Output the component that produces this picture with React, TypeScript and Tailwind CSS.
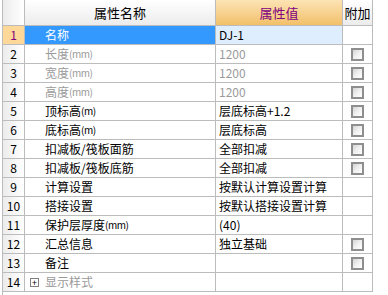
import React from 'react'

type Row = {
	name: string
	unit?: string
	value: string
	check: boolean
	muted?: boolean
	expand?: boolean
}

const rows: Row[] = [
	{ name: '名称', value: 'DJ-1', check: false },
	{ name: '长度', unit: '(mm)', value: '1200', check: true, muted: true },
	{ name: '宽度', unit: '(mm)', value: '1200', check: true, muted: true },
	{ name: '高度', unit: '(mm)', value: '1200', check: true, muted: true },
	{ name: '顶标高', unit: '(m)', value: '层底标高+1.2', check: true },
	{ name: '底标高', unit: '(m)', value: '层底标高', check: true },
	{ name: '扣减板/筏板面筋', value: '全部扣减', check: true },
	{ name: '扣减板/筏板底筋', value: '全部扣减', check: true },
	{ name: '计算设置', value: '按默认计算设置计算', check: false },
	{ name: '搭接设置', value: '按默认搭接设置计算', check: false },
	{ name: '保护层厚度', unit: '(mm)', value: '(40)', check: false },
	{ name: '汇总信息', value: '独立基础', check: true },
	{ name: '备注', value: '', check: true },
	{ name: '显示样式', value: '', check: false, muted: true, expand: true },
]

function Checkbox() {
	return (
		<div className="w-[13px] h-[13px] border-2 border-[#8e8e8e] bg-gradient-to-br from-[#d4d4d4] via-[#f0f0f0] to-white" />
	)
}

export default function App() {
	return (
		<div className="w-[388px] h-[295px] bg-white pl-[2px] text-[12px] leading-none text-black" style={{ fontFamily: '"Noto Sans CJK SC", "Liberation Sans", sans-serif' }}>
			<div className="w-[371px] h-full border-l border-[#bcbcbc]">
				<div className="flex h-[26px]">
					<div className="w-[22px] border-r border-b border-[#bcbcbc] bg-gradient-to-r from-[#ececec] to-white" />
					<div className="w-[191px] flex items-center justify-center border-r border-b border-[#bcbcbc] bg-gradient-to-b from-white to-[#ececec] text-[13px]">
						属性名称
					</div>
					<div className="w-[127px] flex items-center justify-center border-r border-b border-[#bcbcbc] bg-gradient-to-b from-[#fce3b4] to-[#f2c068] text-[13px] text-[#800080]">
						属性值
					</div>
					<div className="w-[30px] flex items-center justify-center border-r border-b border-[#bcbcbc] bg-gradient-to-b from-white to-[#ececec] text-[13px]">
						附加
					</div>
				</div>
				{rows.map((r, i) => {
					const selected = i === 0
					return (
						<div key={i} className="flex h-[19px]">
							<div className={`w-[22px] flex items-center justify-center border-r border-b border-[#bcbcbc] ${selected ? 'bg-[#fdd898] text-[#800080]' : 'bg-gradient-to-r from-[#ececec] to-white'}`}>
								{i + 1}
							</div>
							<div className={`w-[191px] flex items-center border-r border-b border-[#bcbcbc] ${selected ? 'bg-[#3399ff] text-white pl-[20px]' : 'pl-[20px]'} ${r.muted ? 'text-[#9a9a9a]' : ''}`}>
								{r.expand && (
									<span className="-ml-[15px] mr-[6px] w-[9px] h-[9px] border border-[#808080] bg-white flex items-center justify-center text-[9px] text-black leading-none">+</span>
								)}
								<span>{r.name}</span>
								{r.unit && <span className="text-[10px] tracking-[-0.5px]">{r.unit}</span>}
							</div>
							<div className={`w-[127px] flex items-center pl-[3px] border-r border-b border-[#bcbcbc] ${selected ? 'bg-[#dfeeff]' : ''} ${r.muted ? 'text-[#9a9a9a]' : ''}`}>
								{r.value}
							</div>
							<div className="w-[30px] flex items-center justify-center border-r border-b border-[#bcbcbc]">
								{r.check && <Checkbox />}
							</div>
						</div>
					)
				})}
			</div>
		</div>
	)
}
